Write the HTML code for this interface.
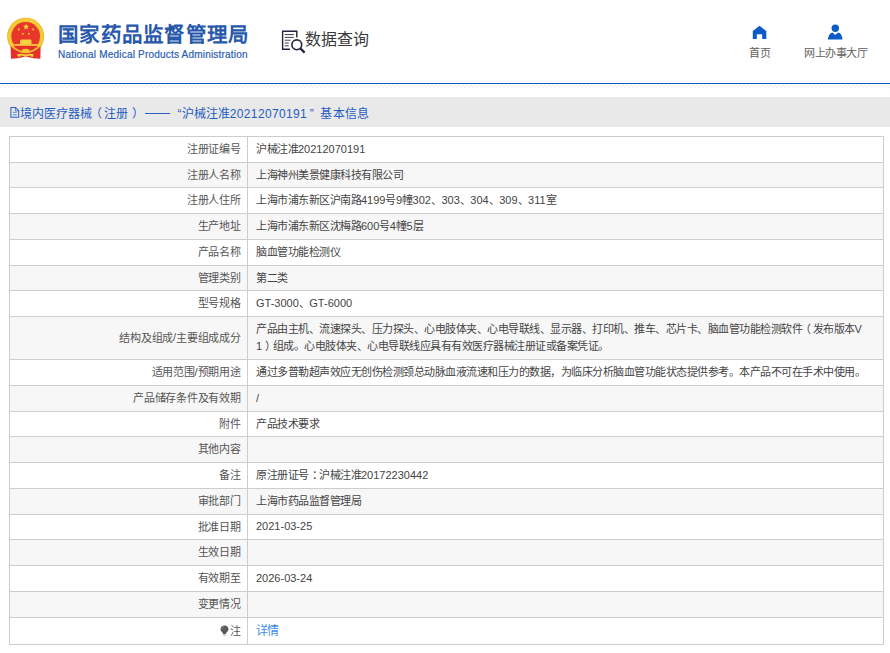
<!DOCTYPE html>
<html lang="zh-CN">
<head>
<meta charset="utf-8">
<style>
*{margin:0;padding:0;box-sizing:border-box}
html,body{width:890px;height:653px;overflow:hidden;background:#fff}
body{position:relative;font-family:"Liberation Sans",sans-serif;color:#444}
.a{position:absolute;white-space:nowrap}
#title{left:58px;top:21px;font-size:20.5px;font-weight:900;letter-spacing:1.3px;color:#2858ab;line-height:28px}
#en{left:58px;top:48px;font-size:10px;letter-spacing:0.2px;color:#2b5db3;-webkit-text-stroke:0.2px #2b5db3;line-height:14px}
#sq{left:305px;top:30px;font-size:16px;color:#3a3a3a;line-height:20px}
.nav{font-size:11px;letter-spacing:-0.4px;color:#606060;line-height:14px}
#blueline{left:0;top:83px;width:890px;height:1px;background:#045ec6}
#hatch{left:0;top:84px;width:890px;height:5px;
 background:repeating-linear-gradient(135deg,#fff 0,#fff 2px,#ececec 2px,#ececec 3px,#fff 3px,#fff 4px)}
#bar{left:0;top:97px;width:890px;height:30px;background:#e9e9e9}
.cr{top:104px;font-size:12px;color:#1f5cc4;line-height:20px}
.row{position:absolute;left:9px;width:875px;border:1px solid #cecccd;border-bottom:none}
.row.g{background:#f7f7f7}
.lab{position:absolute;right:649.45px;font-size:11px;letter-spacing:-0.25px;color:#555;line-height:17px;white-space:nowrap}
.val{position:absolute;left:256px;font-size:11px;letter-spacing:-0.5px;color:#444;line-height:17px;white-space:nowrap}
.n{letter-spacing:0;position:relative;top:-0.5px}
.pl{position:relative;left:-2.5px}
.pr{position:relative;left:2.5px}
.pc{position:relative;left:3px}
#vdiv{left:247px;top:136px;width:1px;height:508px;background:#cecccd}
#tbot{left:9px;top:644px;width:875px;height:1px;background:#cecccd}
</style>
</head>
<body>
<svg class="a" style="left:0;top:0" width="50" height="62" viewBox="0 0 50 62">
  <circle cx="25.65" cy="36.3" r="18.6" fill="#f1bd2c"/>
  <circle cx="25.65" cy="36.3" r="16.2" fill="none" stroke="#f6cf3a" stroke-width="2"/>
  <circle cx="25.7" cy="36.3" r="14.3" fill="#e8372a"/>
  <polygon points="26.06,23.40 26.86,25.70 29.29,25.75 27.35,27.22 28.06,29.55 26.06,28.16 24.06,29.55 24.77,27.22 22.83,25.75 25.26,25.70" fill="#f6d43c"/>
  <polygon points="18.15,27.90 18.88,28.78 19.96,28.41 19.34,29.38 20.03,30.29 18.92,30.00 18.26,30.94 18.20,29.79 17.10,29.46 18.17,29.04" fill="#f6d43c"/>
  <polygon points="33.55,27.90 33.53,29.04 34.60,29.46 33.50,29.79 33.44,30.94 32.78,30.00 31.67,30.29 32.36,29.38 31.74,28.41 32.82,28.78" fill="#f6d43c"/>
  <polygon points="22.72,32.32 23.28,33.32 24.41,33.15 23.63,33.99 24.15,35.01 23.11,34.53 22.30,35.34 22.43,34.20 21.42,33.68 22.54,33.46" fill="#f6d43c"/>
  <polygon points="29.18,32.32 29.36,33.46 30.48,33.68 29.47,34.20 29.60,35.34 28.79,34.53 27.75,35.01 28.27,33.99 27.49,33.15 28.62,33.32" fill="#f6d43c"/>
  <path d="M20.1 44.1 V40.8 L21 39.6 H30.6 L31.5 40.8 V44.1Z" fill="#f7d23e"/>
  <rect x="14.5" y="44.1" width="22.6" height="1.7" fill="#f6d040"/>
  <path d="M10.6 46.2 L40.6 46.2 L40.4 58.7 L33.5 58.2 L25.7 56.5 L17.8 58.2 L11 58.7 Z" fill="#e4302a"/>
  <path d="M11.3 45.6 Q18 52.2 25.7 52.3 Q33.4 52.2 40.1 45.6" fill="none" stroke="#f3c532" stroke-width="1.7"/>
  <ellipse cx="25.7" cy="50.6" rx="3.8" ry="1.8" fill="#f4c832"/>
  <path d="M16.9 54.3 Q21 53.2 25.7 54.4 Q30.4 53.2 33.9 54.3 L32.6 57.2 L29.5 55.6 L25.7 56.8 L21.9 55.6 L18.2 57.2Z" fill="#f4cc36"/>
</svg>
<div class="a" id="title">国家药品监督管理局</div>
<div class="a" id="en">National Medical Products Administration</div>
<svg class="a" style="left:278px;top:25px" width="30" height="30" viewBox="0 0 30 30">
  <path d="M18.8 12.5 V6.2 H4.6 V24.2 H12" fill="none" stroke="#23233a" stroke-width="1.4"/>
  <path d="M6.7 9.6 H15.8 M6.7 12.4 H15.8 M6.7 15.2 H12.5 M6.7 18 H10.8 M6.7 20.8 H10.8" stroke="#3a3a50" stroke-width="1"/>
  <circle cx="18.8" cy="19.8" r="4.9" fill="none" stroke="#23233a" stroke-width="1.6"/>
  <path d="M22.3 23.4 L26.6 27.6" stroke="#23233a" stroke-width="2.2"/>
</svg>
<div class="a" id="sq">数据查询</div>
<svg class="a" style="left:752px;top:25px" width="15" height="15" viewBox="0 0 15 15">
  <path d="M0.8 6.1 L7.5 0.7 L14.3 6.1 V13.9 H10.2 V9.2 H4.8 V13.9 H0.8Z" fill="#0b5cc4"/>
</svg>
<div class="a nav" style="left:749px;top:46px">首页</div>
<svg class="a" style="left:827px;top:23px" width="17" height="18" viewBox="0 0 17 18">
  <circle cx="8.3" cy="5.3" r="3.7" fill="#0b5cc4"/>
  <path d="M0.8 16.6 Q1.5 10.5 5.5 9.4 L8.3 12 L11.1 9.4 Q15.2 10.5 15.5 16.6Z" fill="#0b5cc4"/>
</svg>
<div class="a nav" style="left:804px;top:46px">网上办事大厅</div>
<div class="a" id="blueline"></div>
<svg class="a" style="left:0;top:84px" width="890" height="5" viewBox="0 0 890 5"><defs><pattern id="hp" patternUnits="userSpaceOnUse" width="3.9" height="5"><path d="M-0.2 4.4 L3.4 0.6" stroke="#e2e2e2" stroke-width="0.9"/></pattern></defs><rect x="0" y="0" width="890" height="5" fill="url(#hp)"/></svg>
<div class="a" id="bar"></div>
<svg class="a" style="left:0px;top:100px" width="22" height="22" viewBox="0 100 22 22">
  <path d="M10.9 107.5 H15.6 L18.7 110.6 V117.3 H10.9Z" fill="none" stroke="#2a62c4" stroke-width="1.05"/>
  <path d="M15.4 107.5 V110.8 H18.7" fill="none" stroke="#2a62c4" stroke-width="0.8"/>
  <path d="M12.7 112.3 H16.9 M12.7 114.8 H16.9" stroke="#4a7ad0" stroke-width="0.9"/>
</svg>
<div class="a cr" style="left:20.3px">境内医疗器械</div>
<div class="a cr" style="left:89.8px">（</div>
<div class="a cr" style="left:104px">注册</div>
<div class="a cr" style="left:131.9px">）</div>
<div class="a" style="left:144.6px;top:112.5px;width:25.6px;height:1px;background:#2a62c4"></div>
<div class="a cr" style="left:177.6px">“</div>
<div class="a cr" style="left:181.5px">沪械注准</div>
<div class="a cr" style="left:229.8px;letter-spacing:0.35px">20212070191</div>
<div class="a cr" style="left:309.8px">”</div>
<div class="a cr" style="left:320.2px;letter-spacing:0.4px">基本信息</div>
<div class="row" style="top:136px;height:26px"></div>
<div class="a lab" style="top:141.3px">注册证编号</div>
<div class="a val" style="top:141.3px">沪械注准<span class="n">20212070191</span></div>
<div class="row g" style="top:162px;height:25px"></div>
<div class="a lab" style="top:166.8px">注册人名称</div>
<div class="a val" style="top:166.8px">上海神州美景健康科技有限公司</div>
<div class="row" style="top:187px;height:26px"></div>
<div class="a lab" style="top:192.3px">注册人住所</div>
<div class="a val" style="top:192.3px">上海市浦东新区沪南路<span class="n">4199</span>号<span class="n">9</span>幢<span class="n">302</span>、<span class="n">303</span>、<span class="n">304</span>、<span class="n">309</span>、<span class="n">311</span>室</div>
<div class="row g" style="top:213px;height:26px"></div>
<div class="a lab" style="top:218.3px">生产地址</div>
<div class="a val" style="top:218.3px">上海市浦东新区沈梅路<span class="n">600</span>号<span class="n">4</span>幢<span class="n">5</span>层</div>
<div class="row" style="top:239px;height:26px"></div>
<div class="a lab" style="top:244.3px">产品名称</div>
<div class="a val" style="top:244.3px">脑血管功能检测仪</div>
<div class="row g" style="top:265px;height:25px"></div>
<div class="a lab" style="top:269.8px">管理类别</div>
<div class="a val" style="top:269.8px">第二类</div>
<div class="row" style="top:290px;height:26px"></div>
<div class="a lab" style="top:295.3px">型号规格</div>
<div class="a val" style="top:295.3px"><span class="n">GT-3000</span>、<span class="n">GT-6000</span></div>
<div class="row g" style="top:316px;height:43px"></div>
<div class="a lab" style="top:329.8px">结构及组成<span class="n">/</span>主要组成成分</div>
<div class="a val" style="top:321.3px">产品由主机、流速探头、压力探头、心电肢体夹、心电导联线、显示器、打印机、推车、芯片卡、脑血管功能检测软件<span class="pl">（</span>发布版本<span class="n">V</span><br><span class="n">1</span><span class="pr">）</span>组成。心电肢体夹、心电导联线应具有有效医疗器械注册证或备案凭证。</div>
<div class="row" style="top:359px;height:26px"></div>
<div class="a lab" style="top:364.3px">适用范围<span class="n">/</span>预期用途</div>
<div class="a val" style="top:364.3px">通过多普勒超声效应无创伤检测颈总动脉血液流速和压力的数据，为临床分析脑血管功能状态提供参考。本产品不可在手术中使用。</div>
<div class="row g" style="top:385px;height:26px"></div>
<div class="a lab" style="top:390.3px">产品储存条件及有效期</div>
<div class="a val" style="top:390.3px"><span class="n">/</span></div>
<div class="row" style="top:411px;height:25px"></div>
<div class="a lab" style="top:415.8px">附件</div>
<div class="a val" style="top:415.8px">产品技术要求</div>
<div class="row g" style="top:436px;height:26px"></div>
<div class="a lab" style="top:441.3px">其他内容</div>
<div class="row" style="top:462px;height:26px"></div>
<div class="a lab" style="top:467.3px">备注</div>
<div class="a val" style="top:467.3px">原注册证号<span class="pc">：</span>沪械注准<span class="n">20172230442</span></div>
<div class="row g" style="top:488px;height:26px"></div>
<div class="a lab" style="top:493.3px">审批部门</div>
<div class="a val" style="top:493.3px">上海市药品监督管理局</div>
<div class="row" style="top:514px;height:25px"></div>
<div class="a lab" style="top:518.8px">批准日期</div>
<div class="a val" style="top:518.8px"><span class="n">2021-03-25</span></div>
<div class="row g" style="top:539px;height:26px"></div>
<div class="a lab" style="top:544.3px">生效日期</div>
<div class="row" style="top:565px;height:26px"></div>
<div class="a lab" style="top:570.3px">有效期至</div>
<div class="a val" style="top:570.3px"><span class="n">2026-03-24</span></div>
<div class="row g" style="top:591px;height:26px"></div>
<div class="a lab" style="top:596.3px">变更情况</div>
<div class="row" style="top:617px;height:27px"></div>
<div class="a lab" style="top:622.8px"><svg width="9" height="11" viewBox="0 0 9 11" style="vertical-align:-1px;margin-right:1px"><path d="M4.5 0.5 C2.2 0.5 0.5 2.2 0.5 4.3 C0.5 6 1.9 6.9 3 8.3 L3.2 9.2 H5.8 L6 8.3 C7.1 6.9 8.5 6 8.5 4.3 C8.5 2.2 6.8 0.5 4.5 0.5Z" fill="#5a5a5a"/><path d="M1.9 4 C1.9 2.8 2.8 1.8 4 1.7" fill="none" stroke="#9a9a9a" stroke-width="0.8"/><path d="M3.3 10.2 H5.7" stroke="#aaa" stroke-width="0.9"/></svg>注</div>
<div class="a val" style="top:622.8px;color:#3d8be6;font-size:12px;letter-spacing:-1.2px">详情</div>
<div class="a" id="vdiv"></div>
<div class="a" id="tbot"></div>
</body>
</html>
